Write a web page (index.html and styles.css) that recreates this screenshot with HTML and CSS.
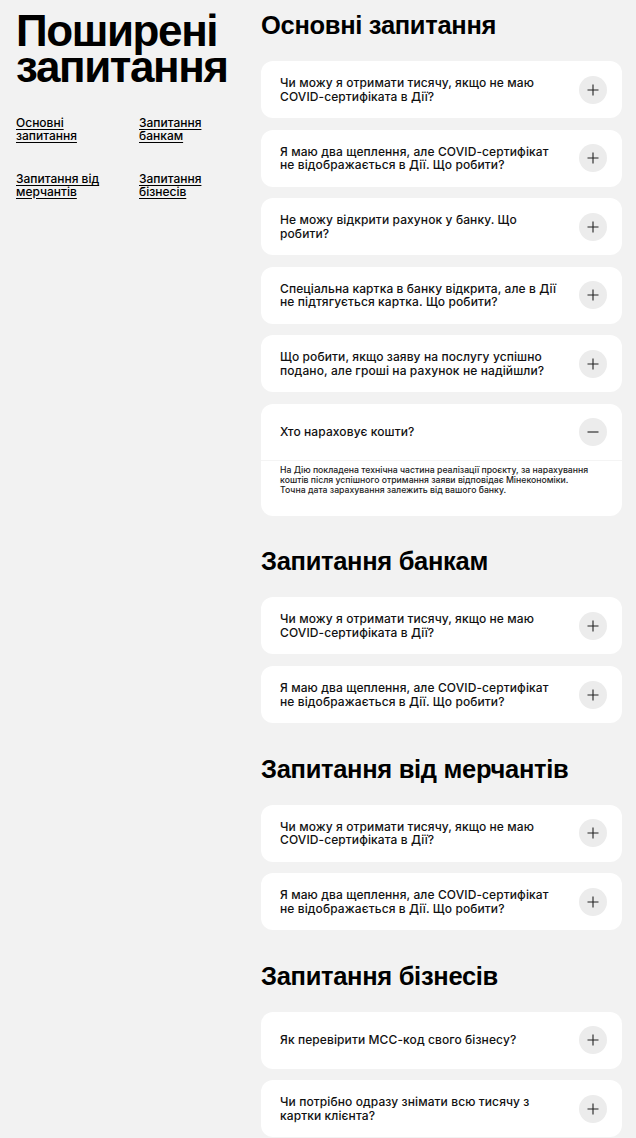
FILE: index.html
```html
<!DOCTYPE html>
<html lang="uk">
<head>
<meta charset="utf-8">
<title>Поширені запитання</title>
<link rel="stylesheet" href="styles.css">
</head>
<body>
<div class="page">
  <aside class="side">
    <h1 class="title">Поширені запитання</h1>
    <nav class="nav">
      <a class="nav-link" href="#main">Основні запитання</a>
      <a class="nav-link" href="#banks">Запитання банкам</a>
      <a class="nav-link" href="#merchants">Запитання від мерчантів</a>
      <a class="nav-link" href="#business">Запитання бізнесів</a>
    </nav>
  </aside>
  <main class="content">
    <section class="section" id="main">
      <h2 class="section-title">Основні запитання</h2>
      <div class="list">
        <div class="item"><div class="item-head"><p class="q">Чи можу я отримати тисячу, якщо не маю COVID-сертифіката в Дії?</p><span class="toggle"><svg viewBox="0 0 12 12" width="12" height="12"><path d="M6 0.5V11.5M0.5 6H11.5"/></svg></span></div></div>
        <div class="item"><div class="item-head"><p class="q">Я маю два щеплення, але COVID-сертифікат не відображається в Дії. Що робити?</p><span class="toggle"><svg viewBox="0 0 12 12" width="12" height="12"><path d="M6 0.5V11.5M0.5 6H11.5"/></svg></span></div></div>
        <div class="item"><div class="item-head"><p class="q">Не можу відкрити рахунок у банку. Що робити?</p><span class="toggle"><svg viewBox="0 0 12 12" width="12" height="12"><path d="M6 0.5V11.5M0.5 6H11.5"/></svg></span></div></div>
        <div class="item"><div class="item-head"><p class="q">Спеціальна картка в банку відкрита, але в Дії не підтягується картка. Що робити?</p><span class="toggle"><svg viewBox="0 0 12 12" width="12" height="12"><path d="M6 0.5V11.5M0.5 6H11.5"/></svg></span></div></div>
        <div class="item"><div class="item-head"><p class="q">Що робити, якщо заяву на послугу успішно подано, але гроші на рахунок не надійшли?</p><span class="toggle"><svg viewBox="0 0 12 12" width="12" height="12"><path d="M6 0.5V11.5M0.5 6H11.5"/></svg></span></div></div>
        <div class="item open"><div class="item-head"><p class="q">Хто нараховує кошти?</p><span class="toggle"><svg viewBox="0 0 12 12" width="12" height="12"><path d="M0.5 6H11.5"/></svg></span></div>
          <p class="answer">На Дію покладена технічна частина реалізації проєкту, за нарахування коштів після успішного отримання заяви відповідає Мінекономіки.<br>Точна дата зарахування залежить від вашого банку.</p>
        </div>
      </div>
    </section>
    <section class="section" id="banks">
      <h2 class="section-title">Запитання банкам</h2>
      <div class="list">
        <div class="item"><div class="item-head"><p class="q">Чи можу я отримати тисячу, якщо не маю COVID-сертифіката в Дії?</p><span class="toggle"><svg viewBox="0 0 12 12" width="12" height="12"><path d="M6 0.5V11.5M0.5 6H11.5"/></svg></span></div></div>
        <div class="item"><div class="item-head"><p class="q">Я маю два щеплення, але COVID-сертифікат не відображається в Дії. Що робити?</p><span class="toggle"><svg viewBox="0 0 12 12" width="12" height="12"><path d="M6 0.5V11.5M0.5 6H11.5"/></svg></span></div></div>
      </div>
    </section>
    <section class="section" id="merchants">
      <h2 class="section-title">Запитання від мерчантів</h2>
      <div class="list">
        <div class="item"><div class="item-head"><p class="q">Чи можу я отримати тисячу, якщо не маю COVID-сертифіката в Дії?</p><span class="toggle"><svg viewBox="0 0 12 12" width="12" height="12"><path d="M6 0.5V11.5M0.5 6H11.5"/></svg></span></div></div>
        <div class="item"><div class="item-head"><p class="q">Я маю два щеплення, але COVID-сертифікат не відображається в Дії. Що робити?</p><span class="toggle"><svg viewBox="0 0 12 12" width="12" height="12"><path d="M6 0.5V11.5M0.5 6H11.5"/></svg></span></div></div>
      </div>
    </section>
    <section class="section" id="business">
      <h2 class="section-title">Запитання бізнесів</h2>
      <div class="list">
        <div class="item"><div class="item-head"><p class="q">Як перевірити МСС-код свого бізнесу?</p><span class="toggle"><svg viewBox="0 0 12 12" width="12" height="12"><path d="M6 0.5V11.5M0.5 6H11.5"/></svg></span></div></div>
        <div class="item"><div class="item-head"><p class="q">Чи потрібно одразу знімати всю тисячу з картки клієнта?</p><span class="toggle"><svg viewBox="0 0 12 12" width="12" height="12"><path d="M6 0.5V11.5M0.5 6H11.5"/></svg></span></div></div>
      </div>
    </section>
  </main>
</div>
</body>
</html>
```

FILE: styles.css
```css
* { box-sizing: border-box; }
html, body { margin: 0; padding: 0; }
body {
  background: #f2f2f2;
  color: #000;
  font-family: Inter, "Noto Sans", sans-serif;
}
.page {
  display: grid;
  grid-template-columns: 229px 361px;
  column-gap: 16px;
  padding: 10px 14px 40px 16px;
  align-items: start;
}
.side { padding-top: 3px; }
.title {
  margin: 0;
  font-family: "Liberation Sans", Arial, sans-serif;
  font-weight: 700;
  font-size: 44px;
  line-height: 36px;
  letter-spacing: -1.4px;
}
.nav {
  display: grid;
  grid-template-columns: 100px 100px;
  column-gap: 23px;
  row-gap: 31px;
  margin-top: 32px;
}
.nav-link {
  color: #000;
  font-size: 12px;
  font-weight: 500;
  line-height: 12.5px;
  text-decoration: underline;
  text-underline-offset: 2px;
}
.section + .section { margin-top: 30.5px; }
.section-title {
  margin: 0 0 21px;
  font-family: "Liberation Sans", Arial, sans-serif;
  font-weight: 700;
  font-size: 25.5px;
  line-height: 30px;
  letter-spacing: -0.3px;
}
.list {
  display: flex;
  flex-direction: column;
  gap: 11.6px;
}
.item {
  background: #fff;
  border-radius: 12px;
}
.item-head {
  display: flex;
  align-items: center;
  gap: 16px;
  min-height: 57px;
  padding: 14px 15px 14px 19px;
}
.q {
  flex: 1;
  margin: 0;
  font-size: 12px;
  font-weight: 500;
  line-height: 13.5px;
  letter-spacing: 0.1px;
  color: #111;
}
.toggle {
  flex: none;
  width: 28px;
  height: 28px;
  border-radius: 50%;
  background: #ececec;
  display: flex;
  align-items: center;
  justify-content: center;
}
.toggle svg path {
  stroke: #222;
  stroke-width: 1.1;
  fill: none;
}
.open .item-head { border-bottom: 1px solid #f4f4f4; }
.answer {
  margin: 0;
  padding: 4px 18px 21px 19px;
  font-size: 8.7px;
  font-weight: 500;
  line-height: 10px;
  color: #222;
}
```
